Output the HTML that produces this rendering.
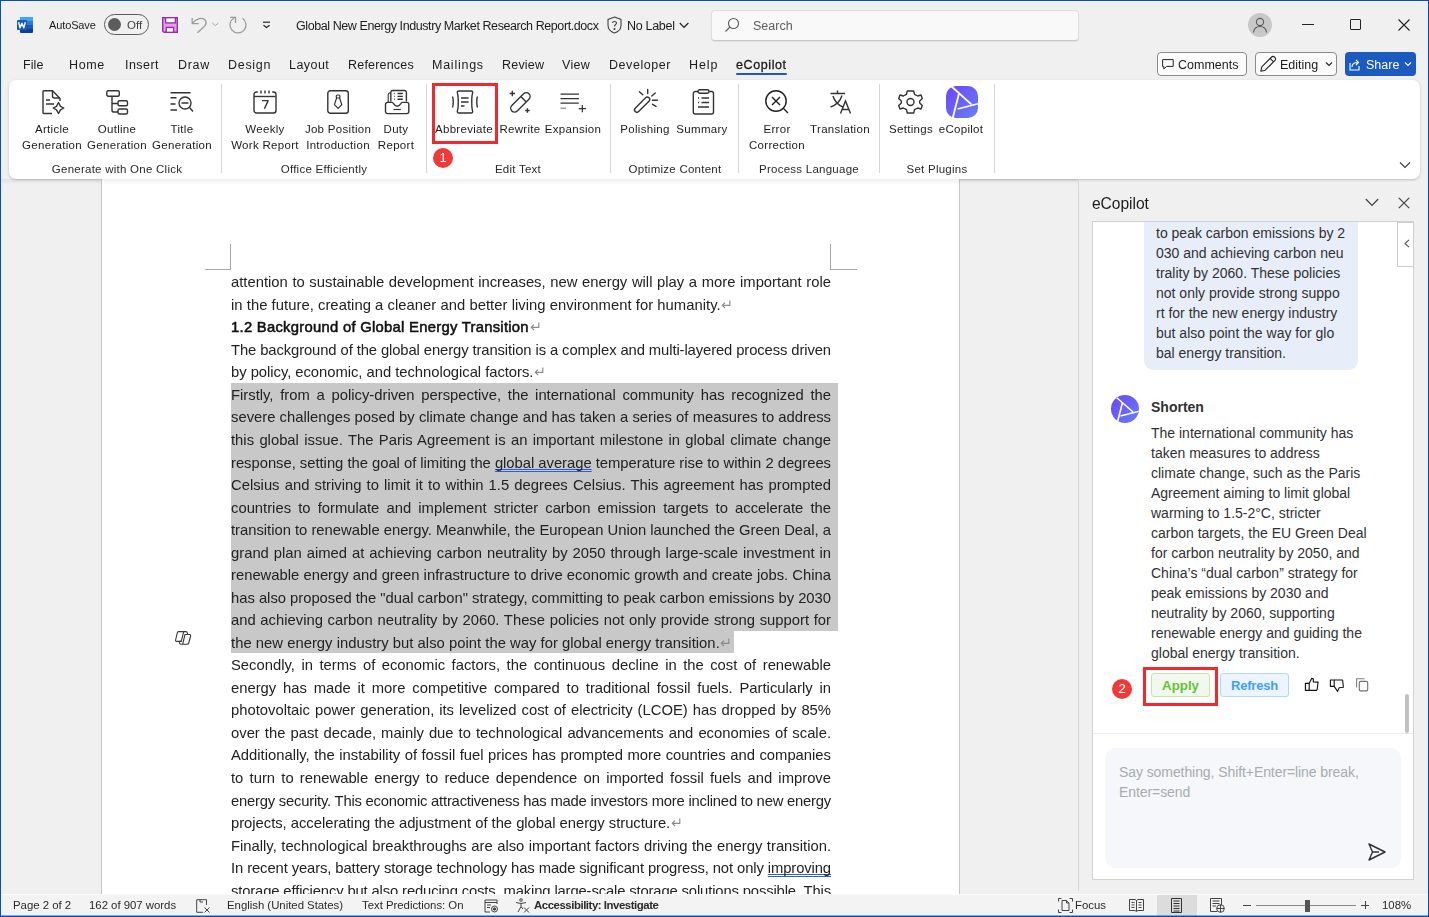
<!DOCTYPE html>
<html><head><meta charset="utf-8">
<style>
*{margin:0;padding:0;box-sizing:border-box}
html,body{width:1429px;height:917px;overflow:hidden;background:#f0f0f0;font-family:"Liberation Sans",sans-serif;color:#242424}
.a{position:absolute;white-space:pre}
svg{position:absolute;overflow:visible}
#frame{position:absolute;left:0;top:0;width:1429px;height:917px;border:1px solid #0a4cbd;pointer-events:none;z-index:50}
.t{font-size:12.5px;color:#1c1c1c;will-change:transform}
.rl{font-size:11.5px;color:#1c1c1c;text-align:center;line-height:16px;letter-spacing:0.3px;will-change:transform}
.gl{font-size:11.5px;color:#2a2a2a;letter-spacing:0.25px;will-change:transform}
.vsep{position:absolute;top:84px;width:1px;height:89px;background:#d6d6d6}
.dl{position:absolute;left:231px;width:600px;font-size:14.8px;line-height:22.5px;height:22.5px;white-space:nowrap;text-align:justify;text-align-last:justify;color:#222;will-change:transform}
.pm{color:#a0a0a0;font-size:11px}
.pt{font-size:14px;color:#303133}
.sb{top:898.7px;font-size:11.4px;color:#2a2a2a;letter-spacing:-0.02px;will-change:transform}
.ll{text-align:left;text-align-last:left;width:auto}
.du{text-decoration-line:underline;text-decoration-style:double;text-decoration-color:#2a5fd6;text-decoration-thickness:1px;text-underline-offset:1px;text-decoration-skip-ink:none}
</style></head><body>
<div id="frame"></div>
<div class="a" style="left:0;top:915px;width:1429px;height:1px;background:rgba(10,76,189,0.45);z-index:49"></div>

<!-- ===== TITLE BAR ===== -->
<!-- word icon -->
<svg style="left:16px;top:16px" width="18" height="18" viewBox="0 0 18 18">
  <rect x="4" y="1" width="13" height="16" rx="1" fill="#103f91"/>
  <rect x="4" y="1" width="13" height="4" fill="#41a5ee"/>
  <rect x="4" y="5" width="13" height="4" fill="#2b7cd3"/>
  <rect x="4" y="9" width="13" height="3.8" fill="#185abd"/>
  <rect x="1" y="4" width="10" height="10" rx="1" fill="#185abd"/>
  <path d="M2.6 6.2 L4 11.8 L5.9 7.3 L7.8 11.8 L9.3 6.2" fill="none" stroke="#fff" stroke-width="1.4" stroke-linejoin="round"/>
</svg>
<div class="a t" style="left:49px;top:19px;font-size:11px;letter-spacing:-0.12px">AutoSave</div>
<div class="a" style="left:104px;top:14px;width:45px;height:21px;border:1px solid #5c5c5c;border-radius:11px"></div>
<div class="a" style="left:108px;top:18px;width:13px;height:13px;border-radius:50%;background:#5c5c5c"></div>
<div class="a t" style="left:127px;top:19px;font-size:11.5px;color:#424242">Off</div>
<!-- save icon purple -->
<svg style="left:161px;top:16px" width="18" height="18" viewBox="0 0 18 18">
  <path d="M1.7 1.7 H16.3 V16.3 H3 L1.7 15 Z" fill="#dca0e3" stroke="#9b2aa8" stroke-width="1.4"/>
  <rect x="4.6" y="1.7" width="9.8" height="5.2" fill="#f7f7f7" stroke="#9b2aa8" stroke-width="1.3"/>
  <rect x="5.3" y="11.4" width="7.3" height="4.9" fill="#f7f7f7" stroke="#9b2aa8" stroke-width="1.3"/>
</svg>
<!-- undo -->
<svg style="left:190px;top:16px" width="20" height="18" viewBox="0 0 20 18" fill="none" stroke="#9a9a9a" stroke-width="1.3">
  <path d="M2.2 1.9 V7.6 H8.7"/><path d="M2.6 7.1 C6 2.5 12.5 0.5 15.5 4.5 C16.7 6.5 16 8.5 14.8 9.9 L7.4 16.7"/>
</svg>
<svg style="left:211px;top:22px" width="9" height="6" viewBox="0 0 9 6" fill="none" stroke="#a8a8a8" stroke-width="1"><path d="M1.3 1 L4.4 3.6 L7.4 1"/></svg>
<!-- redo -->
<svg style="left:228px;top:15px" width="20" height="20" viewBox="0 0 20 20" fill="none" stroke="#9a9a9a" stroke-width="1.3">
  <path d="M14.5 3.3 A8 8 0 1 1 6 3"/><path d="M2.2 2.4 H7.5 V8.1"/>
</svg>
<svg style="left:261px;top:19px" width="11" height="11" viewBox="0 0 11 11" fill="none" stroke="#242424" stroke-width="1.2">
  <path d="M2 3.2 H9"/><path d="M2.5 6.3 L5.5 8.5 L8.6 6.3"/>
</svg>
<div class="a t" style="left:296px;top:19px;font-size:12.5px;letter-spacing:-0.42px">Global New Energy Industry Market Research Report.docx</div>
<!-- shield -->
<svg style="left:606px;top:16px" width="17" height="18" viewBox="0 0 17 18" fill="none" stroke="#424242" stroke-width="1.1">
  <path d="M8.5 1 L15 3.5 V9 C15 13 12 16 8.5 17 C5 16 2 13 2 9 V3.5 Z"/>
  <path d="M6.5 7 C6.5 5 10.5 5 10.5 7 C10.5 8.5 8.5 8.5 8.5 10.5"/><circle cx="8.5" cy="13" r="0.5" fill="#424242"/>
</svg>
<div class="a t" style="left:627px;top:19px;font-size:12.5px;letter-spacing:-0.3px">No Label</div>
<svg style="left:679px;top:22px" width="11" height="8" viewBox="0 0 11 8" fill="none" stroke="#242424" stroke-width="1.2"><path d="M0.8 1 L5 5.3 L9.4 1"/></svg>
<!-- search -->
<div class="a" style="left:711px;top:10px;width:368px;height:31px;border:1px solid #dedede;border-bottom-color:#c8c8c8;border-radius:4px;background:#f9f9f9;box-shadow:0 1px 1px rgba(0,0,0,0.06)"></div>
<svg style="left:724px;top:17px" width="16" height="16" viewBox="0 0 16 16" fill="none" stroke="#5a5a5a" stroke-width="1.1">
  <circle cx="9.5" cy="6.5" r="5"/><path d="M6 10 L1.5 14.5"/>
</svg>
<div class="a t" style="left:753px;top:19px;font-size:12.5px;color:#5c5c5c">Search</div>
<!-- avatar -->
<div class="a" style="left:1248px;top:13px;width:24px;height:24px;border-radius:50%;background:#c8c8c8"></div>
<svg style="left:1252px;top:17px" width="16" height="16" viewBox="0 0 16 16" fill="none" stroke="#5c5c5c" stroke-width="1.1">
  <circle cx="8" cy="5" r="3.6"/><path d="M1.5 15.5 C2 11 5 9.5 8 9.5 C11 9.5 14 11 14.5 15.5"/>
</svg>
<div class="a" style="left:1302px;top:24px;width:12px;height:1px;background:#242424"></div>
<div class="a" style="left:1350px;top:19px;width:11px;height:11px;border:1px solid #242424;border-radius:1px"></div>
<svg style="left:1398px;top:19px" width="12" height="12" viewBox="0 0 12 12" stroke="#242424" stroke-width="1.1"><path d="M0.5 0.5 L11.5 11.5 M11.5 0.5 L0.5 11.5"/></svg>

<!-- ===== TABS ===== -->
<div class="a t" style="left:23px;top:58px;letter-spacing:0.1px">File</div>
<div class="a t" style="left:69px;top:58px;letter-spacing:0.6px">Home</div>
<div class="a t" style="left:125px;top:58px;letter-spacing:0.45px">Insert</div>
<div class="a t" style="left:178px;top:58px;letter-spacing:0.7px">Draw</div>
<div class="a t" style="left:228px;top:58px;letter-spacing:0.7px">Design</div>
<div class="a t" style="left:289px;top:58px;letter-spacing:0.45px">Layout</div>
<div class="a t" style="left:348px;top:58px;letter-spacing:0.2px">References</div>
<div class="a t" style="left:432px;top:58px;letter-spacing:0.75px">Mailings</div>
<div class="a t" style="left:502px;top:58px;letter-spacing:0.2px">Review</div>
<div class="a t" style="left:562px;top:58px;letter-spacing:0.3px">View</div>
<div class="a t" style="left:609px;top:58px;letter-spacing:0.55px">Developer</div>
<div class="a t" style="left:689px;top:58px;letter-spacing:0.9px">Help</div>
<div class="a t" style="left:736px;top:58px;color:#1a1a1a;letter-spacing:0.6px;-webkit-text-stroke:0.3px #1a1a1a">eCopilot</div>
<div class="a" style="left:736px;top:73px;width:51px;height:2px;background:#1f57c3;border-radius:1px"></div>

<!-- right buttons -->
<div class="a" style="left:1157px;top:52px;width:90px;height:24px;border:1px solid #8a8a8a;border-radius:4px;background:#fbfbfb"></div>
<svg style="left:1162px;top:59px" width="12" height="11" viewBox="0 0 12 11" fill="none" stroke="#242424" stroke-width="1"><path d="M0.6 0.6 H11.2 V7.4 H4.6 L1.8 9.9 V7.4 H0.6 Z"/></svg>
<div class="a t" style="left:1178px;top:58px">Comments</div>
<div class="a" style="left:1255px;top:52px;width:82px;height:24px;border:1px solid #8a8a8a;border-radius:4px;background:#fbfbfb"></div>
<svg style="left:1260px;top:56px" width="17" height="16" viewBox="0 0 17 16" fill="none" stroke="#242424" stroke-width="1.1" stroke-linejoin="round"><path d="M0.8 15.2 L1.8 10.8 L11.6 1 C12.4 0.2 13.6 0.2 14.4 1 L15 1.6 C15.8 2.4 15.8 3.6 15 4.4 L5.2 14.2 Z M10.2 2.4 L13.6 5.8"/></svg>
<div class="a t" style="left:1280px;top:58px">Editing</div>
<svg style="left:1325px;top:61px" width="8" height="6" viewBox="0 0 8 6" fill="none" stroke="#242424" stroke-width="1.1"><path d="M1 1.5 L4 4.5 L7 1.5"/></svg>
<div class="a" style="left:1345px;top:52px;width:71px;height:24px;border-radius:4px;background:#1b5bbf"></div>
<svg style="left:1349px;top:58px" width="13" height="13" viewBox="0 0 13 13" fill="none" stroke="#fff" stroke-width="1.1"><path d="M1 5 V12 H10 V8"/><path d="M3 9 C3 6 5 4.5 8.5 4.5 M7 2 L9.5 4.5 L7 7"/></svg>
<div class="a t" style="left:1366px;top:58px;color:#fff">Share</div>
<svg style="left:1404px;top:61px" width="8" height="6" viewBox="0 0 8 6" fill="none" stroke="#fff" stroke-width="1.1"><path d="M1 1.5 L4 4.5 L7 1.5"/></svg>

<!-- ===== RIBBON ===== -->
<div class="a" style="left:9px;top:80px;width:1411px;height:99px;background:#fff;border-radius:7px;box-shadow:0 1px 2.5px rgba(0,0,0,0.22)"></div>
<div class="vsep" style="left:221px"></div>
<div class="vsep" style="left:426px"></div>
<div class="vsep" style="left:610px"></div>
<div class="vsep" style="left:738px"></div>
<div class="vsep" style="left:879px"></div>
<div class="vsep" style="left:994px"></div>
<!-- labels -->
<div class="a rl" style="left:12px;top:121px;width:80px">Article
Generation</div>
<div class="a rl" style="left:77px;top:121px;width:80px">Outline
Generation</div>
<div class="a rl" style="left:142px;top:121px;width:80px">Title
Generation</div>
<div class="a gl" style="left:17px;top:163px;width:200px;text-align:center">Generate with One Click</div>
<div class="a rl" style="left:225px;top:121px;width:80px">Weekly
Work Report</div>
<div class="a rl" style="left:298px;top:121px;width:80px">Job Position
Introduction</div>
<div class="a rl" style="left:356px;top:121px;width:80px">Duty
Report</div>
<div class="a gl" style="left:224px;top:163px;width:200px;text-align:center">Office Efficiently</div>
<div class="a rl" style="left:424px;top:121px;width:80px">Abbreviate</div>
<div class="a rl" style="left:480px;top:121px;width:80px">Rewrite</div>
<div class="a rl" style="left:533px;top:121px;width:80px">Expansion</div>
<div class="a gl" style="left:418px;top:163px;width:200px;text-align:center">Edit Text</div>
<div class="a rl" style="left:605px;top:121px;width:80px">Polishing</div>
<div class="a rl" style="left:662px;top:121px;width:80px">Summary</div>
<div class="a gl" style="left:575px;top:163px;width:200px;text-align:center">Optimize Content</div>
<div class="a rl" style="left:737px;top:121px;width:80px">Error
Correction</div>
<div class="a rl" style="left:800px;top:121px;width:80px">Translation</div>
<div class="a gl" style="left:709px;top:163px;width:200px;text-align:center">Process Language</div>
<div class="a rl" style="left:871px;top:121px;width:80px">Settings</div>
<div class="a rl" style="left:921px;top:121px;width:80px">eCopilot</div>
<div class="a gl" style="left:837px;top:163px;width:200px;text-align:center">Set Plugins</div>
<!-- chevron -->
<svg style="left:1399px;top:161px" width="12" height="8" viewBox="0 0 12 8" fill="none" stroke="#424242" stroke-width="1.2"><path d="M1 1.5 L6 6.5 L11 1.5"/></svg>

<!-- icons -->

<svg style="left:42px;top:90px" width="23" height="25" viewBox="0 0 23 25" fill="none" stroke="#333" stroke-width="1.4" stroke-linejoin="round">
  <path d="M10 23.5 H2 A1 1 0 0 1 1 22.5 V1.8 A1 1 0 0 1 2 0.8 H10.5 L18 8.5 V11"/>
  <path d="M10.5 0.8 V6 A2 2 0 0 0 12.5 8 H18"/>
  <path d="M4 10 H8 M4 14 H12"/>
  <path d="M16.5 12.5 L18.5 16.3 L21.8 18 L18.5 19.8 L16.5 23.5 L14.5 19.8 L11.2 18 L14.5 16.3 Z"/>
</svg>
<svg style="left:106px;top:90px" width="23" height="24" viewBox="0 0 23 24" fill="none" stroke="#333" stroke-width="1.4">
  <rect x="0.8" y="0.8" width="12.5" height="5.5" rx="1.5"/>
  <path d="M6 6.5 V20.5 A1.5 1.5 0 0 0 7.5 22 H12 M6 13.5 H12"/>
  <rect x="12" y="10.8" width="9.5" height="5" rx="1.5"/>
  <rect x="12" y="19" width="9.5" height="5" rx="1.5"/>
</svg>
<svg style="left:170px;top:92px" width="24" height="21" viewBox="0 0 24 21" fill="none" stroke="#333" stroke-width="1.4">
  <path d="M0.5 0.8 H20.5 M0.5 5.8 H6.5 M0.5 12 H5.5 M0.5 18 H7"/>
  <circle cx="15" cy="11" r="6"/><path d="M11.5 11 H18.5 M19.5 15.5 L23 19.5"/>
</svg>
<svg style="left:253px;top:90px" width="24" height="24" viewBox="0 0 24 24" fill="none" stroke="#333" stroke-width="1.4">
  <path d="M4.8 2 H3.5 A2.5 2.5 0 0 0 1 4.5 V20.5 A2.5 2.5 0 0 0 3.5 23 H20.5 A2.5 2.5 0 0 0 23 20.5 V4.5 A2.5 2.5 0 0 0 20.5 2 H19.2"/>
  <path d="M1 6.5 H22.5"/><path d="M8 0.6 V3.4 M12 0.6 V3.4 M16 0.6 V3.4"/>
  <path d="M9 10.6 H15.2 L11.4 18.8" stroke-linejoin="round"/>
</svg>
<svg style="left:327px;top:90px" width="22" height="24" viewBox="0 0 22 24" fill="none" stroke="#333" stroke-width="1.4">
  <rect x="0.8" y="0.8" width="20.5" height="22.5" rx="2.5"/>
  <rect x="9.3" y="5" width="3.6" height="3" rx="1" stroke-width="1.2"/><path d="M9.6 8 L7.4 14.6 L11.1 18.4 L14.8 14.6 L12.6 8" stroke-width="1.2" stroke-linejoin="round"/>
</svg>
<svg style="left:385px;top:90px" width="25" height="25" viewBox="0 0 25 25" fill="none" stroke="#333" stroke-width="1.4">
  <path d="M5.8 11.5 V2.3 A2 2 0 0 1 7.8 0.5 H19.4 A2 2 0 0 1 21.4 2.3 V11.5"/>
  <path d="M3.2 12.4 V4.8 A2 2 0 0 1 5.2 2.8 H5.8" stroke-width="1.1"/>
  <path d="M9.2 3.5 H9.9 M12.5 3.5 H17.8 M9.2 6.4 H9.9 M12.5 6.4 H17.8 M9.2 9.3 H9.9 M12.5 9.3 H17.8"/>
  <path fill="#fff" d="M2.5 12.4 H7.3 C8.5 12.4 9 16.3 12.2 16.3 C15.4 16.3 15.9 12.4 17.1 12.4 H21.8 A2 2 0 0 1 23.8 14.4 V21.6 A2 2 0 0 1 21.8 23.6 H2.5 A2 2 0 0 1 0.5 21.6 V14.4 A2 2 0 0 1 2.5 12.4 Z"/>
  <path d="M8.5 19.5 H15.8" stroke-width="1.2"/>
</svg>
<svg style="left:451px;top:90px" width="28" height="24" viewBox="0 0 28 24" fill="none" stroke="#333" stroke-width="1.4">
  <path d="M8 1 H20 C21.5 1 22 2 21.5 3.5 C20.5 6.5 20.5 17.5 21.5 20.5 C22 22 21.5 23 20 23 H8 C6.5 23 6 22 6.5 20.5 C7.5 17.5 7.5 6.5 6.5 3.5 C6 2 6.5 1 8 1 Z"/>
  <path d="M10 8 H17.5 M10 12 H17.5 M10 16 H13.5"/>
  <path d="M1.5 6.5 C2.5 9 2.5 15 1.5 17.5 M26.5 6.5 C25.5 9 25.5 15 26.5 17.5"/>
</svg>
<svg style="left:508px;top:90px" width="24" height="24" viewBox="0 0 24 24" fill="none" stroke="#333" stroke-width="1.4">
  <path d="M4.3 0.8 V6.2 M1.6 3.5 H7 M19.4 18.3 V22.7 M17.2 20.5 H21.6"/>
  <rect x="0.3" y="8.6" width="24.2" height="7.6" rx="3.8" transform="rotate(-45 12.4 12.4)"/>
  <path d="M13 6.8 L18 11.8"/>
</svg>
<svg style="left:560px;top:93px" width="27" height="20" viewBox="0 0 27 20" fill="none" stroke="#333" stroke-width="1.25">
  <path d="M0.5 1 H19 M0.5 5.6 H19 M0.5 10.2 H18.8"/><path d="M0.5 15.2 H6" stroke="#888"/><path d="M22.3 12 V19.2 M18.7 15.6 H25.9"/>
</svg>
<svg style="left:634px;top:89px" width="25" height="24" viewBox="0 0 25 24" fill="none" stroke="#333" stroke-width="1.4" stroke-linecap="round">
  <path d="M13.7 0.5 V4.5 M5.4 2.7 L8.8 5.8 M21.2 4 L17.8 7 M18.5 11.2 H23.5 M18.5 15.3 L22 17.4"/>
  <path d="M11.6 8.8 A2.4 2.4 0 0 1 15 12.2 L4.6 22.6 A2.4 2.4 0 0 1 1.2 19.2 Z"/>
</svg>
<svg style="left:692px;top:89px" width="23" height="26" viewBox="0 0 23 26" fill="none" stroke="#333" stroke-width="1.4">
  <rect x="6" y="0.8" width="11" height="3.5" rx="1.7"/>
  <path d="M6 2.5 H3.5 A2 2 0 0 0 1.3 4.5 V23 A2 2 0 0 0 3.3 25 H19.5 A2 2 0 0 0 21.5 23 V4.5 A2 2 0 0 0 19.5 2.5 H17"/>
  <path d="M6 9 H7 M9.5 9 H17 M6 13.5 H7 M9.5 13.5 H17 M6 18 H17"/>
</svg>
<svg style="left:765px;top:90px" width="24" height="24" viewBox="0 0 24 24" fill="none" stroke="#1f1f1f" stroke-width="1.4">
  <circle cx="11" cy="11" r="10.2"/><path d="M7 7 L15 15 M15 7 L7 15 M18.5 18.5 L23 23"/>
</svg>
<svg style="left:830px;top:90px" width="23" height="24" viewBox="0 0 23 24" fill="none" stroke="#333" stroke-width="1.4">
  <path d="M0.5 3.5 H15 M7.5 0.5 V3.5 M3 6 C4.5 11 8 15 13 17 M12 5.5 C10.5 10.5 6.5 15 0.5 17"/>
  <path d="M10.5 23.5 L15.5 11 L20.5 23.5 M12.2 19.5 H18.8"/>
</svg>
<svg style="left:898px;top:90px" width="25" height="24" viewBox="0 0 25 24" fill="none" stroke="#333" stroke-width="1.4">
  <path d="M9.3 1 H15.7 L16.5 4.3 L19.7 6 L23 5 L24.3 8.5 L21.7 11 V13 L24.3 15.5 L23 19 L19.7 18 L16.5 19.7 L15.7 23 H9.3 L8.5 19.7 L5.3 18 L2 19 L0.7 15.5 L3.3 13 V11 L0.7 8.5 L2 5 L5.3 6 L8.5 4.3 Z" stroke-linejoin="round"/>
  <circle cx="12.5" cy="12" r="3.5"/>
</svg>
<svg style="left:946px;top:86px" width="32" height="32" viewBox="0 0 32 32">
  <defs><linearGradient id="lg1" x1="0" y1="0" x2="1" y2="1"><stop offset="0" stop-color="#7043f4"/><stop offset="1" stop-color="#6381f7"/></linearGradient></defs>
  <rect x="0" y="0" width="32" height="32" rx="10" fill="url(#lg1)"/>
  <path d="M4.5 -0.5 L25.4 18.3 M11.5 23 L33 17.5 M12.8 8.2 L6.5 33" stroke="#fff" stroke-width="1.8" fill="none"/>
</svg>
<!-- red box + badge -->
<div class="a" style="left:432px;top:83px;width:66px;height:61px;border:3px solid #ee2a2f"></div>
<div class="a" style="left:433px;top:148px;width:20px;height:20px;border-radius:50%;background:#f03a3a;color:#fff;font-size:13px;text-align:center;line-height:20px">1</div>

<!-- DOC_START -->
<!-- ===== DOCUMENT ===== -->
<div class="a" style="left:101px;top:179px;width:859px;height:715px;background:#fff;border-left:1px solid #c6c6c6;border-right:1px solid #c6c6c6"></div>
<div class="a" style="left:0;top:179px;width:1078px;height:6px;background:linear-gradient(rgba(0,0,0,0.06),rgba(0,0,0,0))"></div>
<div class="a" style="left:230px;top:244px;width:1px;height:26px;background:#a6a6a6"></div>
<div class="a" style="left:205px;top:269px;width:26px;height:1px;background:#a6a6a6"></div>
<div class="a" style="left:830px;top:244px;width:1px;height:26px;background:#a6a6a6"></div>
<div class="a" style="left:830px;top:269px;width:27px;height:1px;background:#a6a6a6"></div>
<div class="a" style="left:231px;top:383px;width:607px;height:248px;background:#c8c8c8"></div>
<div class="a" style="left:231px;top:631px;width:503px;height:22px;background:#c8c8c8"></div>
<div class="dl" style="top:271.31px;width:600.0px">attention to sustainable development increases, new energy will play a more important role</div>
<div class="dl ll" style="top:293.84px;letter-spacing:0.040px">in the future, creating a cleaner and better living environment for humanity.</div>
<svg style="left:721.3px;top:299.6px" width="10" height="9" viewBox="0 0 10 9" fill="none" stroke="#8a8a8a" stroke-width="1.15"><path d="M8.8 0.5 V5.3 H1.3 M4 2.6 L1.3 5.3 L4 8"/></svg>
<div class="dl ll" style="top:316.37px;letter-spacing:0.277px;color:#111;-webkit-text-stroke:0.55px #111">1.2 Background of Global Energy Transition</div>
<svg style="left:529.5px;top:322.2px" width="10" height="9" viewBox="0 0 10 9" fill="none" stroke="#8a8a8a" stroke-width="1.15"><path d="M8.8 0.5 V5.3 H1.3 M4 2.6 L1.3 5.3 L4 8"/></svg>
<div class="dl" style="top:338.90px;width:600.0px;letter-spacing:-0.104px">The background of the global energy transition is a complex and multi-layered process driven</div>
<div class="dl ll" style="top:361.43px;letter-spacing:-0.035px">by policy, economic, and technological factors.</div>
<svg style="left:534.0px;top:367.2px" width="10" height="9" viewBox="0 0 10 9" fill="none" stroke="#8a8a8a" stroke-width="1.15"><path d="M8.8 0.5 V5.3 H1.3 M4 2.6 L1.3 5.3 L4 8"/></svg>
<div class="dl" style="top:383.96px;width:600.0px">Firstly, from a policy-driven perspective, the international community has recognized the</div>
<div class="dl" style="top:406.49px;width:600.0px">severe challenges posed by climate change and has taken a series of measures to address</div>
<div class="dl" style="top:429.02px;width:600.0px">this global issue. The Paris Agreement is an important milestone in global climate change</div>
<div class="dl" style="top:451.55px;width:600.0px;letter-spacing:-0.023px">response, setting the goal of limiting the <span class="du">global average</span> temperature rise to within 2 degrees</div>
<div class="dl" style="top:474.08px;width:600.0px">Celsius and striving to limit it to within 1.5 degrees Celsius. This agreement has prompted</div>
<div class="dl" style="top:496.61px;width:600.0px">countries to formulate and implement stricter carbon emission targets to accelerate the</div>
<div class="dl" style="top:519.14px;width:600.0px;letter-spacing:-0.013px">transition to renewable energy. Meanwhile, the European Union launched the Green Deal, a</div>
<div class="dl" style="top:541.67px;width:600.0px">grand plan aimed at achieving carbon neutrality by 2050 through large-scale investment in</div>
<div class="dl" style="top:564.20px;width:600.0px">renewable energy and green infrastructure to drive economic growth and create jobs. China</div>
<div class="dl" style="top:586.73px;width:600.0px;letter-spacing:-0.019px">has also proposed the &quot;dual carbon&quot; strategy, committing to peak carbon emissions by 2030</div>
<div class="dl" style="top:609.26px;width:600.0px">and achieving carbon neutrality by 2060. These policies not only provide strong support for</div>
<div class="dl ll" style="top:631.79px;letter-spacing:0.024px">the new energy industry but also point the way for global energy transition.</div>
<svg style="left:720.4px;top:637.6px" width="10" height="9" viewBox="0 0 10 9" fill="none" stroke="#8a8a8a" stroke-width="1.15"><path d="M8.8 0.5 V5.3 H1.3 M4 2.6 L1.3 5.3 L4 8"/></svg>
<div class="dl" style="top:654.32px;width:600.0px">Secondly, in terms of economic factors, the continuous decline in the cost of renewable</div>
<div class="dl" style="top:676.85px;width:600.0px">energy has made it more competitive compared to traditional fossil fuels. Particularly in</div>
<div class="dl" style="top:699.38px;width:600.0px">photovoltaic power generation, its levelized cost of electricity (LCOE) has dropped by 85%</div>
<div class="dl" style="top:721.91px;width:600.0px">over the past decade, mainly due to technological advancements and economies of scale.</div>
<div class="dl" style="top:744.44px;width:600.0px">Additionally, the instability of fossil fuel prices has prompted more countries and companies</div>
<div class="dl" style="top:766.97px;width:600.0px">to turn to renewable energy to reduce dependence on imported fossil fuels and improve</div>
<div class="dl" style="top:789.50px;width:600.0px;letter-spacing:-0.214px">energy security. This economic attractiveness has made investors more inclined to new energy</div>
<div class="dl ll" style="top:812.03px;letter-spacing:-0.024px">projects, accelerating the adjustment of the global energy structure.</div>
<svg style="left:670.8px;top:817.8px" width="10" height="9" viewBox="0 0 10 9" fill="none" stroke="#8a8a8a" stroke-width="1.15"><path d="M8.8 0.5 V5.3 H1.3 M4 2.6 L1.3 5.3 L4 8"/></svg>
<div class="dl" style="top:834.56px;width:600.0px">Finally, technological breakthroughs are also important factors driving the energy transition.</div>
<div class="dl" style="top:857.09px;width:600.0px;letter-spacing:-0.103px">In recent years, battery storage technology has made significant progress, not only <span class="du">improving</span></div>
<div class="dl" style="top:879.62px;width:600.0px;letter-spacing:-0.138px">storage efficiency but also reducing costs, making large-scale storage solutions possible. This</div>
<svg style="left:175px;top:631px" width="17" height="14" viewBox="0 0 17 14" fill="none" stroke="#383838" stroke-width="1.1" stroke-linejoin="round"><path d="M3.4 0.6 H8.7 L6.3 10.4 H1.6 Q0.3 10.4 0.6 9 L2.3 1.8 Q2.6 0.6 3.4 0.6 Z"/><path d="M8.7 0.6 H11 Q12.2 0.6 12.4 2 L12.6 3.5"/><path d="M10 3.5 H14.6 Q15.9 3.5 15.6 5 L13.7 12 Q13.4 13.2 12.2 13.2 H7.7 Z"/><path d="M6.3 10.4 H5 Q4.2 10.4 4.4 11.6 Q4.7 13.2 5.9 13.2 H7.7"/></svg>
<!-- DOC_END -->
<!-- PANE_START -->
<!-- ===== PANE ===== -->
<div class="a" style="left:1078px;top:179px;width:1px;height:712px;background:#d6d6d6"></div>
<div class="a" style="left:1092px;top:194.5px;font-size:15.6px;letter-spacing:-0.05px;color:#1c1c1c;will-change:transform">eCopilot</div>
<svg style="left:1365px;top:198px" width="14" height="9" viewBox="0 0 14 9" fill="none" stroke="#424242" stroke-width="1.2"><path d="M0.8 1 L7 7.5 L13.2 1"/></svg>
<svg style="left:1398px;top:197px" width="12" height="12" viewBox="0 0 12 12" fill="none" stroke="#424242" stroke-width="1.2"><path d="M0.8 0.8 L11.2 11.2 M11.2 0.8 L0.8 11.2"/></svg>
<div class="a" style="left:1092px;top:221px;width:322px;height:659px;background:#fff;border:1px solid #d2d2d2"></div>
<!-- bubble -->
<div class="a" style="left:1144px;top:222px;width:214px;height:148px;background:#e8eef9;border-radius:0 0 9px 9px"></div>
<div class="a pt" style="left:1156px;top:223px;line-height:20px">to peak carbon emissions by 2
030 and achieving carbon neu
trality by 2060. These policies
not only provide strong suppo
rt for the new energy industry
but also point the way for glo
bal energy transition.</div>
<!-- collapse tab -->
<div class="a" style="left:1397px;top:222px;width:17px;height:45px;background:#fff;border:1px solid #cdcdcd"></div>
<svg style="left:1404px;top:239px" width="6" height="9" viewBox="0 0 6 9" fill="none" stroke="#555" stroke-width="1.1"><path d="M5 0.8 L1 4.5 L5 8.2"/></svg>
<!-- bot avatar -->
<svg style="left:1111px;top:395px" width="28" height="28" viewBox="0 0 28 28">
  <defs><linearGradient id="lg2" x1="0" y1="0" x2="1" y2="1"><stop offset="0" stop-color="#7043f4"/><stop offset="1" stop-color="#6381f7"/></linearGradient>
  <clipPath id="cc"><circle cx="14" cy="14" r="14"/></clipPath></defs>
  <circle cx="14" cy="14" r="14" fill="url(#lg2)"/>
  <g clip-path="url(#cc)"><path d="M5.5 2.5 L22 17 M9.5 21 L29 16 M11.5 7.5 L6 29" stroke="#fff" stroke-width="1.6" fill="none"/></g>
</svg>
<div class="a" style="left:1151px;top:399px;font-size:14px;font-weight:700;color:#303133">Shorten</div>
<div class="a pt" style="left:1151px;top:423px;line-height:20px">The international community has
taken measures to address
climate change, such as the Paris
Agreement aiming to limit global
warming to 1.5-2°C, stricter
carbon targets, the EU Green Deal
for carbon neutrality by 2050, and
China’s “dual carbon” strategy for
peak emissions by 2030 and
neutrality by 2060, supporting
renewable energy and guiding the
global energy transition.</div>
<!-- buttons -->
<div class="a" style="left:1151px;top:673px;width:59px;height:24px;background:#f0f9eb;border:1px solid #c2e7b0;border-radius:3px;color:#67c23a;font-size:13.3px;font-weight:700;text-align:center;line-height:23px">Apply</div>
<div class="a" style="left:1220px;top:673px;width:69px;height:24px;background:#ecf5ff;border:1px solid #b3d8ff;border-radius:3px;color:#409eff;font-size:13px;font-weight:700;letter-spacing:-0.2px;text-align:center;line-height:23px">Refresh</div>
<div class="a" style="left:1143px;top:667px;width:75px;height:39px;border:3px solid #ee2a2f"></div>
<div class="a" style="left:1112px;top:679px;width:20px;height:20px;border-radius:50%;background:#f03a3a;color:#fff;font-size:13px;text-align:center;line-height:20px">2</div>
<!-- thumbs -->
<svg style="left:1298px;top:672px" width="76" height="26" viewBox="0 0 76 26" fill="none" stroke="#111" stroke-width="1.1" stroke-linejoin="round">
  <path d="M7.4 11.4 H11.2 V18.4 H7.4 Z"/>
  <path d="M11.2 11.4 L13.6 6.4 L15.3 6.9 V9.9 L20.1 10.1 L19.1 17.7 L18.4 18.4 H11.2"/>
  <path d="M32.4 8 H36.2 V14.4 H32.4 Z"/>
  <path d="M36.2 8 H44.6 L45.4 15.3 L41.2 15.8 L39.6 19.4 L36.2 14.4"/>
  <path d="M58.6 15.4 V6.7 H66.6" stroke="#808080"/>
  <rect x="61.3" y="9.4" width="8.4" height="9.5" rx="1.3" stroke="#707070"/>
</svg>
<!-- scrollbar thumb -->
<div class="a" style="left:1405px;top:694px;width:4px;height:39px;background:#c1c1c1;border-radius:2px"></div>
<div class="a" style="left:1093px;top:733px;width:320px;height:1px;background:#ececec"></div>
<!-- input -->
<div class="a" style="left:1105px;top:748px;width:296px;height:120px;background:#f5f7fa;border-radius:10px"></div>
<div class="a" style="left:1119px;top:763px;font-size:14px;line-height:19.5px;color:#a8abb2;letter-spacing:-0.08px">Say something, Shift+Enter=line break,
Enter=send</div>
<svg style="left:1368px;top:843px" width="18" height="18" viewBox="0 0 18 18" fill="none" stroke="#303133" stroke-width="1.4" stroke-linejoin="round">
  <path d="M1 1 L17 9 L1 17 L4.5 9 Z M4.5 9 H11"/>
</svg>

<!-- PANE_END -->
<!-- STATUS_START -->
<!-- ===== STATUS BAR ===== -->
<div class="a" style="left:0;top:894px;width:1429px;height:23px;background:#f3f3f3;border-top:1px solid #fbfbfb"></div>
<div class="a sb" style="left:13px">Page 2 of 2</div>
<div class="a sb" style="left:89px">162 of 907 words</div>
<svg style="left:196px;top:899px" width="15" height="14" viewBox="0 0 15 14" fill="none" stroke="#444" stroke-width="1"><path d="M7 13.3 H0.7 V0.7 H10.5 V6"/><path d="M4 0.7 V3 H7"/><path d="M8.5 8.5 L13.5 13.5 M13.5 8.5 L8.5 13.5"/></svg>
<div class="a sb" style="left:227px">English (United States)</div>
<div class="a sb" style="left:362px">Text Predictions: On</div>
<svg style="left:484px;top:899px" width="15" height="14" viewBox="0 0 15 14" fill="none" stroke="#444" stroke-width="1"><path d="M13 5 V1 H1 V13 H6"/><path d="M1 3.5 H13 M3 6 H7 M3 8.5 H6"/><circle cx="10.5" cy="10" r="3"/><circle cx="10.5" cy="10" r="1.2" fill="#444"/></svg>
<svg style="left:515px;top:898px" width="15" height="15" viewBox="0 0 15 15" fill="none" stroke="#444" stroke-width="1"><circle cx="6" cy="2" r="1.3"/><path d="M1 4.5 L6 5.5 L11 4.5 M6 5.5 V8.5 L3 14 M6 8.5 L8 11"/><path d="M9 9.5 L14 14.5 M14 9.5 L9 14.5"/></svg>
<div class="a sb" style="left:534px;font-weight:700;letter-spacing:-0.45px">Accessibility: Investigate</div>
<svg style="left:1058px;top:898px" width="15" height="15" viewBox="0 0 15 15" fill="none" stroke="#444" stroke-width="1"><path d="M0.5 3.5 V0.5 H3.5 M11.5 0.5 H14.5 V3.5 M14.5 11.5 V14.5 H11.5 M3.5 14.5 H0.5 V11.5"/><path d="M4 2.5 H8.5 L11 5 V12.5 H4 Z M8.5 2.5 V5 H11"/></svg>
<div class="a sb" style="left:1075px">Focus</div>
<svg style="left:1129px;top:898px" width="15" height="14" viewBox="0 0 15 14" fill="none" stroke="#444" stroke-width="1"><path d="M0.5 1.5 H6 L7.5 2.5 L9 1.5 H14.5 V12.5 H9 L7.5 13.5 L6 12.5 H0.5 Z M7.5 2.5 V13"/><path d="M2.5 4.5 H5.5 M2.5 7 H5.5 M2.5 9.5 H5.5 M9.5 4.5 H12.5 M9.5 7 H12.5 M9.5 9.5 H12.5"/></svg>
<div class="a" style="left:1157px;top:895px;width:40px;height:21px;background:#dcdcdc"></div>
<svg style="left:1171px;top:898px" width="11" height="15" viewBox="0 0 11 15" fill="none" stroke="#333" stroke-width="1"><path d="M0.5 0.5 H10.5 V14.5 H0.5 Z M2.5 3 H8.5 M2.5 5.5 H8.5 M2.5 8 H8.5 M2.5 10.5 H8.5 M2.5 13 H8.5"/></svg>
<svg style="left:1210px;top:898px" width="15" height="15" viewBox="0 0 15 15" fill="none" stroke="#444" stroke-width="1"><path d="M7 13.5 H0.5 V0.5 H11.5 V7"/><path d="M2.5 3 H9.5 M2.5 5.5 H9.5 M2.5 8 H6"/><circle cx="10.5" cy="10.5" r="3.8"/><path d="M6.7 10.5 H14.3 M10.5 6.7 V14.3"/></svg>
<div class="a" style="left:1243px;top:905px;width:8px;height:1px;background:#444"></div>
<div class="a" style="left:1256px;top:905px;width:100px;height:1px;background:#8a8a8a"></div>
<div class="a" style="left:1305px;top:900px;width:5px;height:12px;background:#555"></div>
<div class="a" style="left:1361px;top:905px;width:8px;height:1px;background:#444"></div>
<div class="a" style="left:1364.5px;top:901px;width:1px;height:8px;background:#444"></div>
<div class="a sb" style="left:1382px">108%</div>

<!-- STATUS_END -->
</body></html>
